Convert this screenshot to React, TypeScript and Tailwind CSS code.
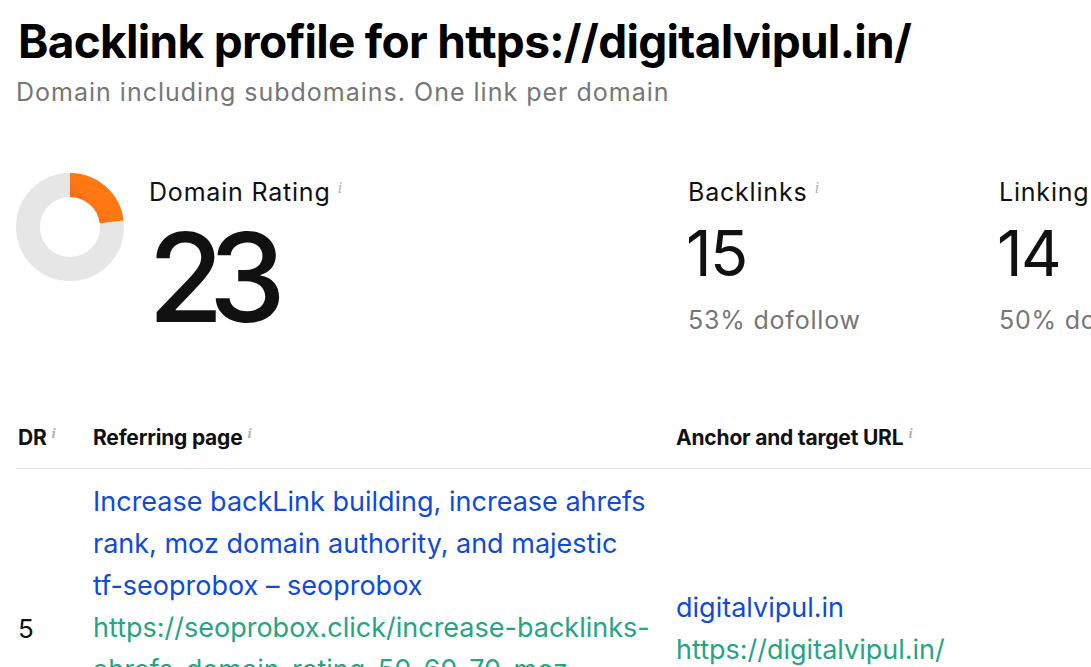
import React from 'react';

const Info = ({ small }: { small?: boolean }) => (
  <span
    className={`relative italic text-[#b3b3b3] font-['Liberation_Serif',serif] ${
      small ? 'ml-[5px] -top-[7px] text-[15px]' : 'ml-[7px] -top-[8px] text-[17px]'
    }`}
  >
    i
  </span>
);

const Donut = ({ value }: { value: number }) => {
  const r = 42;
  const c = 2 * Math.PI * r;
  const dash = (value / 100) * c;
  return (
    <svg width="108" height="108" viewBox="0 0 108 108" className="shrink-0">
      <defs>
        <linearGradient id="dr" x1="0.45" y1="0" x2="1" y2="0.6">
          <stop offset="0%" stopColor="#ef2f36" />
          <stop offset="100%" stopColor="#ff7812" />
        </linearGradient>
      </defs>
      <circle cx="54" cy="54" r={r} fill="none" stroke="#e6e6e6" strokeWidth="24" />
      <circle
        cx="54"
        cy="54"
        r={r}
        fill="none"
        stroke="url(#dr)"
        strokeWidth="24"
        strokeDasharray={`${dash} ${c}`}
        transform="rotate(-90 54 54)"
      />
    </svg>
  );
};

export default function App() {
  return (
    <div className="w-[1300px] min-h-screen bg-white text-[#111] font-['Inter',sans-serif] overflow-hidden">
      <div className="px-4 pt-[15px]">
        {/* Header */}
        <h1 className="pl-[2px] text-[46px] font-bold leading-[52px] tracking-[-0.7px] text-black">
          Backlink profile for https://digitalvipul.in/
        </h1>
        <p className="mt-[8px] text-[25px] leading-[34px] tracking-[1px] text-[#767676]">
          Domain including subdomains. One link per domain
        </p>

        {/* Stats */}
        <div className="mt-[64px] flex">
          <div className="w-[672px] flex">
            <Donut value={23} />
            <div className="ml-[25px] mt-[2px]">
              <div className="text-[25px] leading-[34px] tracking-[0.8px]">
                Domain Rating<Info />
              </div>
              <div className="mt-[3px] -ml-[1px] text-[123px] leading-[123px] tracking-[-15px] font-medium">23</div>
            </div>
          </div>
          <div className="w-[311px] mt-[2px]">
            <div className="text-[25px] leading-[34px] tracking-[0.8px]">
              Backlinks<Info />
            </div>
            <div className="mt-[2px] -ml-[2px] text-[63px] leading-[76px] tracking-[-1.5px]">15</div>
            <div className="mt-[11px] text-[25px] leading-[36px] tracking-[0.8px] text-[#767676]">53% dofollow</div>
          </div>
          <div className="mt-[2px] whitespace-nowrap">
            <div className="text-[25px] leading-[34px] tracking-[0.8px]">
              Linking domains<Info />
            </div>
            <div className="mt-[2px] -ml-[2px] text-[63px] leading-[76px] tracking-[-1.5px]">14</div>
            <div className="mt-[11px] text-[25px] leading-[36px] tracking-[0.8px] text-[#767676]">50% dofollow</div>
          </div>
        </div>

        {/* Table */}
        <table className="mt-[69px] w-[1200px] border-collapse text-left">
          <thead>
            <tr className="border-b border-[#e5e5e5]">
              <th className="w-[77px] pl-[2px] h-[60px] text-[21px] font-bold tracking-[-0.2px] align-middle">
                DR<Info small />
              </th>
              <th className="w-[583px] text-[21px] font-bold tracking-[-0.2px] align-middle">
                Referring page<Info small />
              </th>
              <th className="text-[21px] font-bold tracking-[-0.2px] align-middle">
                Anchor and target URL<Info small />
              </th>
            </tr>
          </thead>
          <tbody>
            <tr>
              <td className="pl-[2px] pt-[14px] align-middle text-[26px]">5</td>
              <td className="pt-[12px] pr-[20px] align-middle text-[27px] leading-[42px]">
                <a className="block text-[#0f4bd8]">
                  Increase backLink building, increase ahrefs rank, moz domain authority, and majestic{' '}
                  <span className="whitespace-nowrap">tf-seoprobox</span> – seoprobox
                </a>
                <a className="block text-[#27a583]">
                  https://seoprobox.click/increase-backlinks-ahrefs-domain-rating-50-60-70-moz-domain-authority-and-majestic-tf-seoprobox/
                </a>
              </td>
              <td className="pt-[14px] align-middle text-[27px] leading-[42px]">
                <a className="block text-[#0f4bd8]">digitalvipul.in</a>
                <a className="block text-[#27a583]">https://digitalvipul.in/</a>
              </td>
            </tr>
          </tbody>
        </table>
      </div>
    </div>
  );
}
